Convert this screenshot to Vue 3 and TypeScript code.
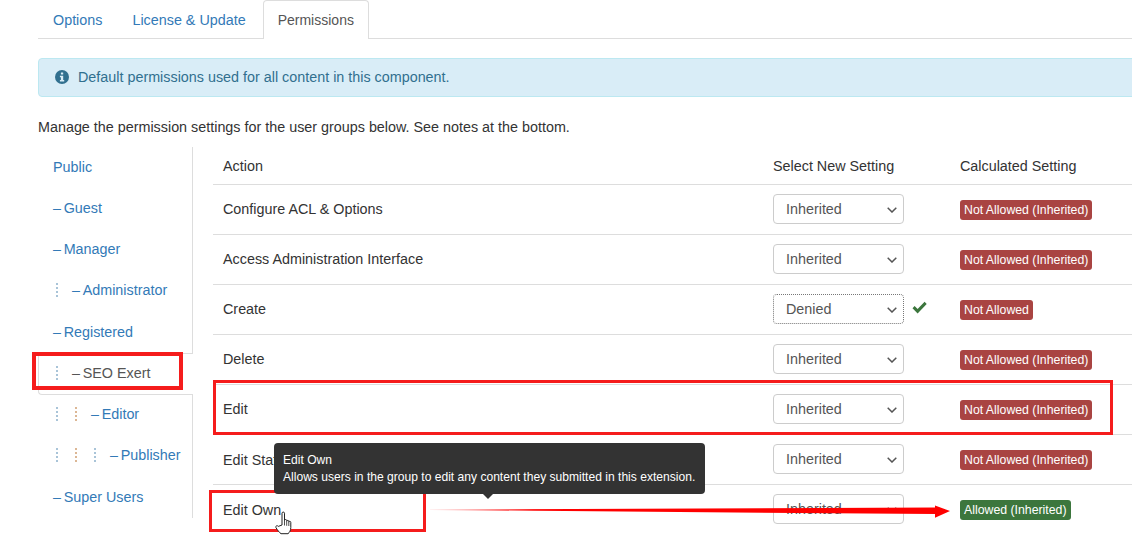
<script setup lang="ts">
interface Group { name: string; guides: string[]; dash: boolean; active?: boolean }
interface Row { action: string; setting: string; calc: string; ok?: boolean; saved?: boolean }

const tabs = ['Options', 'License & Update', 'Permissions']

const groups: Group[] = [
  { name: 'Public', guides: [], dash: false },
  { name: 'Guest', guides: [], dash: true },
  { name: 'Manager', guides: [], dash: true },
  { name: 'Administrator', guides: ['blue'], dash: true },
  { name: 'Registered', guides: [], dash: true },
  { name: 'SEO Exert', guides: ['blue'], dash: true, active: true },
  { name: 'Editor', guides: ['blue', 'orange'], dash: true },
  { name: 'Publisher', guides: ['blue', 'orange', 'blue'], dash: true },
  { name: 'Super Users', guides: [], dash: true },
]

const rows: Row[] = [
  { action: 'Configure ACL & Options', setting: 'Inherited', calc: 'Not Allowed (Inherited)' },
  { action: 'Access Administration Interface', setting: 'Inherited', calc: 'Not Allowed (Inherited)' },
  { action: 'Create', setting: 'Denied', calc: 'Not Allowed', saved: true },
  { action: 'Delete', setting: 'Inherited', calc: 'Not Allowed (Inherited)' },
  { action: 'Edit', setting: 'Inherited', calc: 'Not Allowed (Inherited)' },
  { action: 'Edit State', setting: 'Inherited', calc: 'Not Allowed (Inherited)' },
  { action: 'Edit Own', setting: 'Inherited', calc: 'Allowed (Inherited)', ok: true },
]
</script>

<template>
  <div class="page">
    <div class="content">
      <ul class="tabs">
        <li v-for="(t, i) in tabs" :key="t" class="tab" :class="{ current: i === 2 }">{{ t }}</li>
      </ul>

      <div class="alert">
        <svg class="info" viewBox="0 0 14 14" width="14" height="14">
          <circle cx="7" cy="7" r="7" fill="#31708f" />
          <rect x="5.900" y="2.400" width="2.300" height="2.200" rx="0.400" fill="#d9edf7" />
          <path d="M4.900 5.800h3.300v4.300h1v1.400H4.900v-1.400h1V7.200h-1z" fill="#d9edf7" />
        </svg>
        <span>Default permissions used for all content in this component.</span>
      </div>

      <p class="intro">Manage the permission settings for the user groups below. See notes at the bottom.</p>

      <div class="perm">
        <ul class="side">
          <li v-for="g in groups" :key="g.name" class="side-item" :class="{ active: g.active }">
            <span v-for="(c, i) in g.guides" :key="i" class="guide" :class="c"></span>
            <span v-if="g.dash" class="dash">–&nbsp;</span>
            <span>{{ g.name }}</span>
          </li>
        </ul>

        <div class="table">
          <div class="row head">
            <div>Action</div>
            <div>Select New Setting</div>
            <div>Calculated Setting</div>
          </div>
          <div v-for="r in rows" :key="r.action" class="row">
            <div class="action">{{ r.action }}</div>
            <div class="setting">
              <div class="sel-wrap">
                <select class="sel" :class="{ focused: r.saved }">
                  <option>{{ r.setting }}</option>
                </select>
                <svg class="chev" viewBox="0 0 10 6" width="10" height="6">
                  <path d="M0.700 0.700 5 5 9.300 0.700" fill="none" stroke="#555" stroke-width="1.500" />
                </svg>
              </div>
              <svg v-if="r.saved" class="check" viewBox="0 0 15 13" width="15" height="13">
                <path d="M0.500 7.200 2.600 5 5.600 8 12.600 0.800 14.700 3 5.600 12.400z" fill="#3c763d" />
              </svg>
            </div>
            <div><span class="badge" :class="r.ok ? 'ok' : 'no'">{{ r.calc }}</span></div>
          </div>
        </div>
      </div>
    </div>

    <div class="mark mark-seo"></div>
    <div class="mark mark-edit"></div>
    <div class="mark mark-own"></div>

    <div class="tooltip">
      <div>Edit Own</div>
      <div>Allows users in the group to edit any content they submitted in this extension.</div>
    </div>

    <svg class="arrow" viewBox="0 0 530 20" width="530" height="20">
      <defs>
        <linearGradient id="fade" x1="0" x2="1" y1="0" y2="0">
          <stop offset="0" stop-color="#ff0000" stop-opacity="0.1" />
          <stop offset="0.2" stop-color="#ff0000" />
        </linearGradient>
      </defs>
      <path d="M0 9.500 505 7.500V5.500L520 11 505 17.700V14L0 10z" fill="url(#fade)" />
    </svg>

    <svg class="hand" viewBox="0 0 18 24" width="18" height="24">
      <path
        d="M7 2.200c0-1.500 2.500-1.500 2.500 0v7.300c0-1.300 2.200-1.300 2.200 0v.8c0-1.200 2.100-1.200 2.100 0v.8c0-1.100 2-1.100 2 .2v5.200c0 3-1.300 5-2.800 6.200H6c-1.500-1-3.500-3.500-5-6-.8-1.600 1.200-2.900 2.300-1.300L7 14z"
        fill="#fff" stroke="#222" stroke-width="1" stroke-linejoin="round"
      />
      <path d="M9.500 9.500v5M11.700 10.300v4.500M13.800 11v4" stroke="#222" stroke-width="0.800" fill="none" />
    </svg>
  </div>
</template>

<style>
html, body { margin: 0; background: #fff; overflow: hidden; }
</style>

<style scoped>
.page {
  position: relative;
  width: 1132px;
  height: 541px;
  overflow: hidden;
  background: #fff;
  font-family: "Liberation Sans", Arial, sans-serif;
  font-size: 14.350px;
  line-height: 20px;
  color: #333;
}
.content { width: 1240px; padding-left: 38px; box-sizing: border-box; }
ul { list-style: none; margin: 0; padding: 0; }

.tabs { display: flex; height: 38px; border-bottom: 1px solid #ddd; }
.tab {
  padding: 9px 14px 8px;
  border: 1px solid transparent;
  border-bottom: 0;
  border-radius: 4px 4px 0 0;
  color: #337ab7;
  height: 20px;
}
.tab.current {
  margin-left: 2px;
  color: #555;
  background: #fff;
  border-color: #ddd;
  height: 21px;
  font-size: 14px;
}

.alert {
  display: flex;
  align-items: center;
  gap: 9px;
  margin-top: 19px;
  height: 39px;
  box-sizing: border-box;
  padding: 0 16px 2px;
  background: #d9edf7;
  border: 1px solid #bce8f1;
  border-radius: 4px;
  color: #31708f;
}
.info { flex: none; }

.intro { margin: 20px 0 0; height: 20px; }

.perm { display: flex; margin-top: 10px; align-items: flex-start; }
.side { width: 155px; flex: none; margin-right: 20px; }
.side-item {
  display: flex;
  align-items: center;
  box-sizing: border-box;
  height: 41.250px;
  padding: 0 0 2px 15px;
  border-right: 1px solid #ddd;
  color: #337ab7;
  white-space: pre;
}
.side-item.active {
  color: #555;
  border: 1px solid #ddd;
  border-right: 0;
  border-radius: 4px 0 0 4px;
  padding-left: 14px;
}
.guide {
  flex: none;
  width: 0;
  height: 14px;
  margin: 0 14px 0 3px;
  border-left: 2px dotted #a9c4d8;
}
.guide.orange { border-left-color: #dcb795; }
.dash { margin-right: -1.300px; }

.table { flex: 1; min-width: 0; }
.row {
  display: grid;
  grid-template-columns: 550px 187px 1fr;
  align-items: center;
  height: 50px;
  padding: 0 10px 1px;
  border-bottom: 1px solid #ddd;
  box-sizing: border-box;
}
.row:last-child { border-bottom: 0; }
.row:last-child .setting { margin-top: -2px; }
.row:nth-child(7) .action { margin-top: 2px; }
.row.head { height: 38px; padding-bottom: 0; }

.setting { display: flex; align-items: center; gap: 8px; }
.sel-wrap { position: relative; width: 131px; height: 30px; flex: none; }
.sel {
  display: block;
  width: 131px;
  height: 30px;
  padding: 0 12px;
  appearance: none;
  background-color: #fff;
  border: 1px solid #ccc;
  border-radius: 4px;
  color: #555;
  font-family: inherit;
  font-size: 14.350px;
}
.sel.focused { border: 1px dotted #777; }
.chev { position: absolute; right: 7px; top: 13px; pointer-events: none; }
.check { margin-top: -4px; }

.badge {
  display: inline-block;
  padding: 3px 4px 2px;
  border-radius: 3px;
  color: #fff;
  font-size: 12.300px;
  line-height: 15px;
  vertical-align: middle;
}
.badge.no { background: #a94442; }
.badge.ok { background: #3c763d; }

.mark { position: absolute; box-sizing: border-box; border: 3px solid #f51c1c; pointer-events: none; }
.mark-seo { left: 32px; top: 352px; width: 151px; height: 38px; border-width: 4px; }
.mark-edit { left: 213px; top: 380px; width: 900px; height: 55px; }
.mark-own { left: 209px; top: 490px; width: 217px; height: 42px; }

.tooltip {
  position: absolute;
  left: 274px;
  top: 443px;
  width: 431px;
  height: 51px;
  box-sizing: border-box;
  padding: 9px 9px;
  background: #333;
  border-radius: 4px;
  color: #fff;
  font-size: 12.080px;
  line-height: 17px;
  white-space: nowrap;
}
.tooltip::after {
  content: "";
  position: absolute;
  left: 209px;
  top: 51px;
  border: 5px solid transparent;
  border-top-color: #333;
  border-bottom: 0;
}

.arrow { position: absolute; left: 430px; top: 500px; }
.hand { position: absolute; left: 275px; top: 511px; }
</style>
